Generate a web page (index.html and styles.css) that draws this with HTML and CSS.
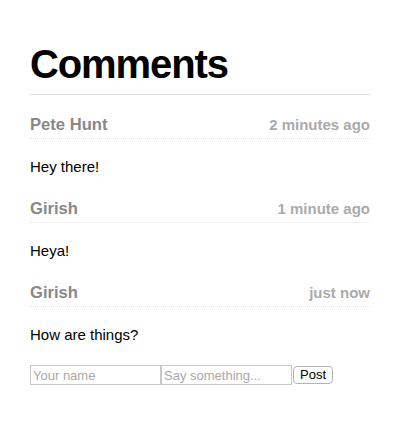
FILE: index.html
```html
<!DOCTYPE html>
<html>
<head>
<meta charset="utf-8">
<link rel="stylesheet" href="styles.css">
</head>
<body>
<div class="comment-box">
  <h1 class="title">Comments</h1>
  <div class="comment-list">
    <div class="comment">
      <div class="comment-head">
        <h2 class="author">Pete Hunt</h2>
        <span class="date">2 minutes ago</span>
      </div>
      <p class="text">Hey there!</p>
    </div>
    <div class="comment">
      <div class="comment-head">
        <h2 class="author">Girish</h2>
        <span class="date">1 minute ago</span>
      </div>
      <p class="text">Heya!</p>
    </div>
    <div class="comment">
      <div class="comment-head">
        <h2 class="author">Girish</h2>
        <span class="date">just now</span>
      </div>
      <p class="text">How are things?</p>
    </div>
  </div>
  <form class="comment-form">
    <input class="field" type="text" placeholder="Your name">
    <input class="field" type="text" placeholder="Say something...">
    <button class="post" type="button">Post</button>
  </form>
</div>
</body>
</html>
```
FILE: styles.css
```css
html, body {
  background: #fff;
}
body {
  margin: 0;
  padding: 30px;
  font-family: "Liberation Sans", Arial, Helvetica, sans-serif;
  font-size: 15px;
  line-height: 1.7;
  color: #000;
}
.comment-box {
  width: 340px;
}
.title {
  margin: 11px 0 0;
  font-size: 40px;
  line-height: 46px;
  font-weight: bold;
  letter-spacing: -1.1px;
  padding-bottom: 7px;
  border-bottom: 1px solid #ddd;
}
.comment {
  margin-top: 18px;
}
.comment + .comment {
  margin-top: 17px;
}
.comment-head {
  display: flex;
  justify-content: space-between;
  align-items: baseline;
  padding-bottom: 1px;
  border-bottom: 1px dotted #e6e6e6;
}
.author {
  margin: 0;
  font-size: 16.6px;
  line-height: 24px;
  font-weight: bold;
  color: #888;
}
.date {
  font-size: 15px;
  line-height: 24px;
  font-weight: bold;
  color: #aaa;
}
.text {
  margin: 15px 0 0;
  line-height: 26px;
}
.comment-form {
  display: flex;
  align-items: center;
  margin-top: 17px;
}
.field {
  box-sizing: border-box;
  width: 131px;
  height: 20px;
  margin: 0;
  padding: 1px 2px;
  border: 1px solid #c8c8c8;
  font-family: "Liberation Sans", Arial, sans-serif;
  font-size: 13px;
  color: #000;
  background: #fff;
  outline: none;
}
.field::placeholder {
  color: #a9a9a9;
}
.post {
  box-sizing: border-box;
  height: 18px;
  margin-left: 1px;
  padding: 0 6px;
  border: 1px solid #b4b4b4;
  border-radius: 4px;
  background: #fff;
  font-family: "Liberation Sans", Arial, sans-serif;
  font-size: 13px;
  line-height: 16px;
  color: #000;
}
```
